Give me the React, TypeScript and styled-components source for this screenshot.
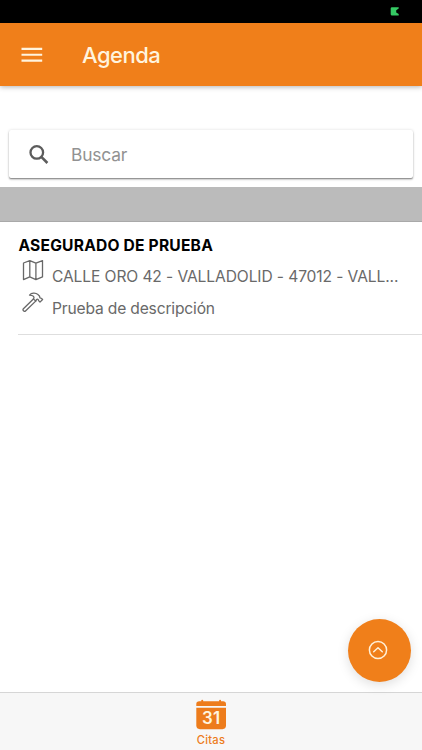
import React from 'react';
import styled, { createGlobalStyle } from 'styled-components';

const GlobalStyle = createGlobalStyle`
  * { box-sizing: border-box; }
  body { margin: 0; background: #fff; font-family: Inter, "Liberation Sans", sans-serif; }
`;

const Screen = styled.div`
  position: relative;
  display: flex;
  flex-direction: column;
  width: 422px;
  height: 750px;
  overflow: hidden;
  background: #fff;
`;

const StatusBar = styled.div`
  display: flex;
  justify-content: flex-end;
  height: 23px;
  padding: 7px 23px 0 0;
  background: #000;
`;

const Header = styled.header`
  display: flex;
  align-items: center;
  height: 62.5px;
  padding: 1px 0 0 21px;
  gap: 39px;
  background: #f07f1a;
  box-shadow: 0 1px 5px rgba(0, 0, 0, 0.3);
`;

const Title = styled.h1`
  margin: 0;
  color: #fff4de;
  font-size: 22px;
  line-height: 28px;
  font-weight: 500;
  letter-spacing: -0.5px;
`;

const SearchBox = styled.div`
  display: flex;
  align-items: center;
  height: 48px;
  margin: 44.5px 9px 9px 9px;
  padding-left: 20px;
  gap: 22px;
  border-radius: 2px;
  background: #fff;
  box-shadow: 0 2px 2px rgba(0, 0, 0, 0.16), 0 1px 1px rgba(0, 0, 0, 0.3), 0 0 3px rgba(0, 0, 0, 0.14);
`;

const Placeholder = styled.span`
  padding-top: 2px;
  color: #929292;
  font-size: 17.4px;
  line-height: 24px;
  letter-spacing: -0.2px;
`;

const DateBand = styled.div`
  height: 35px;
  background: #bbb;
  border-bottom: 1px solid #a9a9a9;
`;

const Appointment = styled.article`
  height: 113px;
  margin-left: 18px;
  padding-top: 13px;
  border-bottom: 1px solid #dedede;
`;

const Client = styled.h2`
  margin: 0;
  height: 22px;
  padding-left: 0.5px;
  color: #000;
  font-size: 15.6px;
  line-height: 22px;
  font-weight: 700;
  letter-spacing: 0.2px;
  white-space: nowrap;
`;

const Detail = styled.div`
  display: flex;
  height: 32px;
  padding-left: 4px;
  gap: 8px;
`;

const DetailText = styled.span<{ $spacing: number }>`
  padding-top: 9px;
  color: #696969;
  font-size: 15.6px;
  line-height: 22px;
  letter-spacing: ${(p) => p.$spacing}px;
  white-space: nowrap;
`;

const FloatingButton = styled.button`
  position: absolute;
  right: 11.5px;
  bottom: 68.5px;
  display: flex;
  align-items: center;
  justify-content: center;
  width: 63px;
  height: 63px;
  padding: 0 3px 0 0;
  border: 0;
  border-radius: 50%;
  background: #f07f1a;
  box-shadow: 0 3px 12px rgba(0, 0, 0, 0.13);
`;

const TabBar = styled.nav`
  display: flex;
  justify-content: center;
  height: 58px;
  margin-top: auto;
  border-top: 1px solid #d6d6d6;
  background: #f7f7f7;
`;

const Tab = styled.a`
  display: flex;
  flex-direction: column;
  align-items: center;
  padding-top: 6px;
  color: #ed7c1c;
  font-size: 11.2px;
  line-height: 14px;
  font-weight: 500;
  letter-spacing: 0.2px;
`;

const TabLabel = styled.span`
  margin-top: 3px;
`;

const Icon = styled.svg`
  display: block;
  flex: none;
`;

export default function App() {
  return (
    <>
      <GlobalStyle />
      <Screen>
        <StatusBar>
          <Icon width="9" height="9" viewBox="0 0 9 9">
            <path d="M1.5 .2H8.7V1.500L6.200 3.200v2.200l2.500 1.600v1.400h-7.200L.7 7.600V1Z" fill="#35c963" />
          </Icon>
        </StatusBar>
        <Header>
          <Icon width="22" height="16" viewBox="0 0 22 16">
            <path d="M.5 1.9h20.7M.5 7.8h20.7M.5 13.6h20.7" stroke="#fff4de" strokeWidth="2.1" />
          </Icon>
          <Title>Agenda</Title>
        </Header>
        <SearchBox>
          <Icon width="20" height="21" viewBox="0 0 20 21" fill="none" stroke="#5c5c5c">
            <circle cx="7.8" cy="8.4" r="6.300" strokeWidth="2.3" />
            <path d="m12.100 12.700 6.300 6.300" strokeWidth="2.600" />
          </Icon>
          <Placeholder>Buscar</Placeholder>
        </SearchBox>
        <DateBand />
        <Appointment>
          <Client>ASEGURADO DE PRUEBA</Client>
          <Detail>
            <Icon width="22" height="26" viewBox="0 0 22 26" fill="none" stroke="#686868" strokeWidth="1.3" strokeLinejoin="round">
              <path d="M1.500 6 7.800 3.600l6.100 2.600 6.600-2.600v16.300l-6.600 2.700-6.100-2.700-6.300 2.700ZM7.800 3.600v16.300M13.900 6.200v16.400" />
            </Icon>
            <DetailText $spacing={-0.11}>CALLE ORO 42 - VALLADOLID - 47012 - VALL...</DetailText>
          </Detail>
          <Detail>
            <Icon width="22" height="26" viewBox="0 -1.8 22 26" fill="none" stroke="#686868" strokeWidth="1.3" strokeLinejoin="round" strokeLinecap="round">
              <path d="M11.4 8.2 1.4 18c-.7.8-.5 1.4.1 2s1.300.9 2 .2L13.7 10.300" />
              <path d="M7.500 4.300c2-2.300 6-2.600 8.500-.5l1.400 1.400c.4.500.2 1.200.5 1.700.5.500 1.100.2 1.600.7l1.100 1.100-2.600 2.600-1.200-1.200c-.5-.5-.2-1.100-.7-1.500-.5-.400-1.100-.2-1.600.2l-.8 1.500-2.300-2.200c.8-.9.8-1.900-.3-2.800-.9-.8-2.100-.9-3.600-1Z" />
            </Icon>
            <DetailText $spacing={-0.17}>Prueba de descripción</DetailText>
          </Detail>
        </Appointment>
        <TabBar>
          <Tab>
            <Icon width="30" height="31" viewBox="-0.3 0 30.3 31">
              <path d="M0 7V5c0-1.900 1.100-2.800 3-2.800h2V1.500q0-1 1-1t1 1v.7h16v-.7q0-1 1-1t1 1v.7h2c1.900 0 3 .9 3 2.800v2Z" fill="#ed7c1c" />
              <path d="M0 8.600h30v18.100c0 2.400-1.300 3.600-3.600 3.600H3.600C1.300 30.300 0 29.100 0 26.700Z" fill="#ed7c1c" />
              <text x="15" y="25.500" textAnchor="middle" fill="#fff5df" fontFamily="Inter, sans-serif" fontSize="17" fontWeight="600">31</text>
            </Icon>
            <TabLabel>Citas</TabLabel>
          </Tab>
        </TabBar>
        <FloatingButton aria-label="Subir">
          <Icon width="20" height="20" viewBox="0 0 20 20" fill="none" stroke="#fff0d8" strokeWidth="1.5" strokeLinecap="round" strokeLinejoin="round">
            <circle cx="10" cy="10" r="8.600" />
            <path d="m5.700 11.800 4.300-4 4.300 4" />
          </Icon>
        </FloatingButton>
      </Screen>
    </>
  );
}
